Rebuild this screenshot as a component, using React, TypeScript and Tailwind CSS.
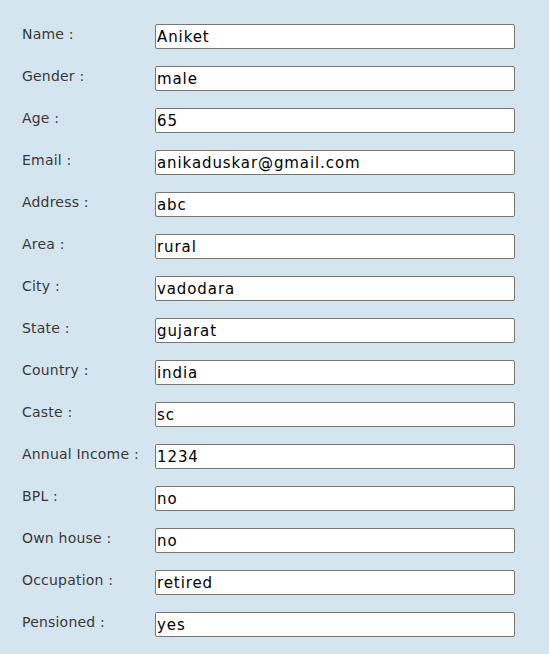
import React from "react";

const rows: [string, string][] = [
  ["Name :", "Aniket"],
  ["Gender :", "male"],
  ["Age :", "65"],
  ["Email :", "anikaduskar@gmail.com"],
  ["Address :", "abc"],
  ["Area :", "rural"],
  ["City :", "vadodara"],
  ["State :", "gujarat"],
  ["Country :", "india"],
  ["Caste :", "sc"],
  ["Annual Income :", "1234"],
  ["BPL :", "no"],
  ["Own house :", "no"],
  ["Occupation :", "retired"],
  ["Pensioned :", "yes"],
];

const ff = '"DejaVu Sans", "Open Sans", sans-serif';

export default function App() {
  return (
    <div
      className="w-[549px] h-[654px] bg-[#d5e5f0] pt-[24px] pl-[22px] flex flex-col gap-[17px]"
      style={{ fontFamily: ff }}
    >
      {rows.map(([label, value]) => (
        <div key={label} className="flex items-start">
          <div className="w-[133px] text-[14px] leading-[20px] tracking-[0.2px] text-[#383838]">{label}</div>
          <input
            readOnly
            value={value}
            className="w-[360px] h-[25px] border border-[#767676] rounded-[2px] bg-white px-[1px] py-0 text-[15px] leading-[20px] tracking-[0.9px] text-black outline-none"
            style={{ fontFamily: ff }}
          />
        </div>
      ))}
    </div>
  );
}
